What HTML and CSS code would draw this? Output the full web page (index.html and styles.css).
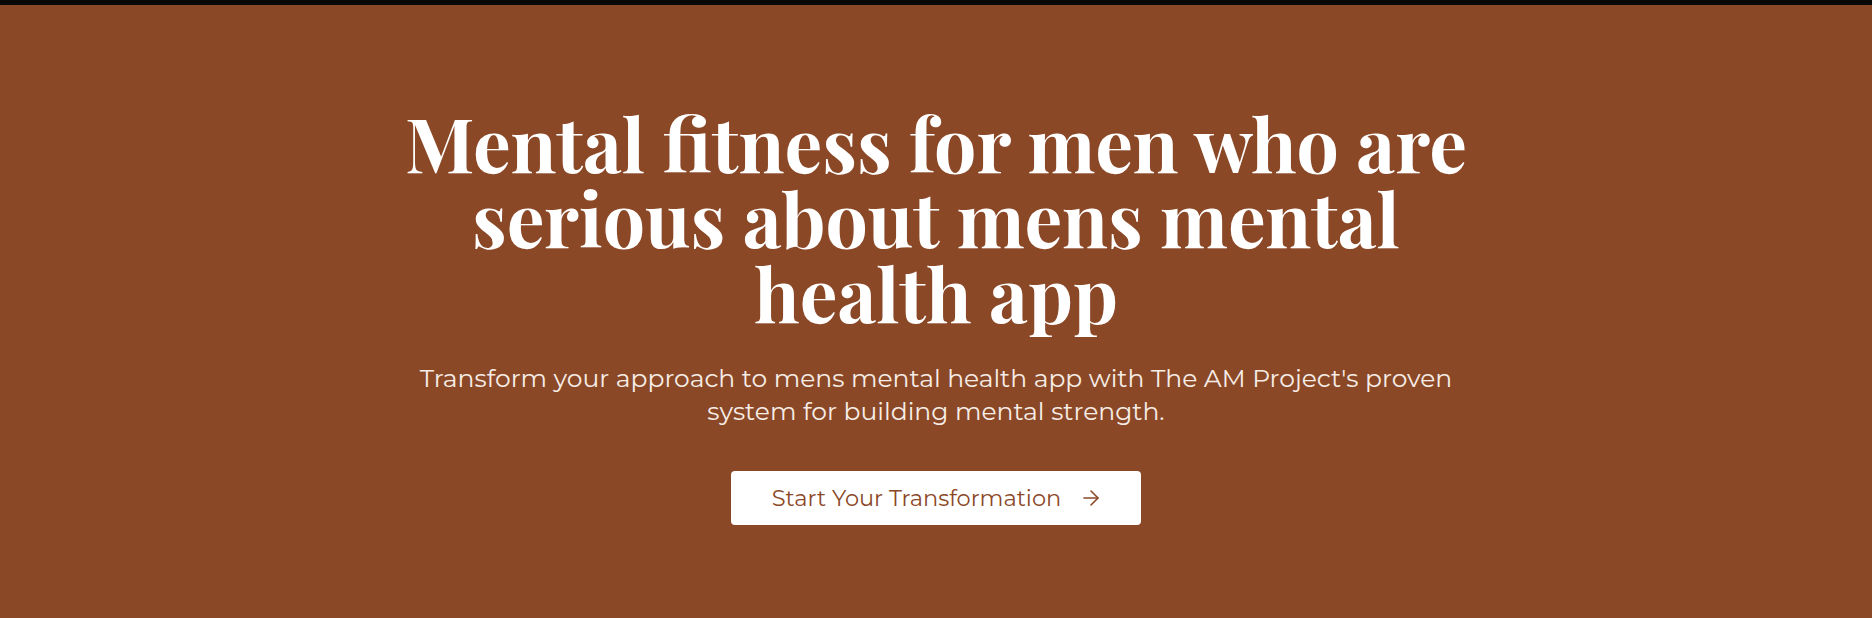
FILE: index.html
```html
<!DOCTYPE html>
<html lang="en">
<head>
<meta charset="utf-8">
<title>The AM Project</title>
<link rel="stylesheet" href="styles.css">
</head>
<body>
<div class="topbar"></div>
<section class="hero">
  <h1 class="hero-title">Mental fitness for men who are serious about mens mental health app</h1>
  <p class="hero-text">Transform your approach to mens mental health app with The AM Project's proven system for building mental strength.</p>
  <a class="hero-btn" href="#">
    <span>Start Your Transformation</span>
    <svg class="hero-btn-icon" viewBox="0 0 24 24" width="24" height="24" fill="none" stroke="currentColor" stroke-width="1.6" stroke-linecap="round" stroke-linejoin="round"><path d="M5 12h14"/><path d="m12 5 7 7-7 7"/></svg>
  </a>
</section>
</body>
</html>
```

FILE: styles.css
```css
html, body {
  margin: 0;
  padding: 0;
}

body {
  background: #8b4827;
  height: 618px;
  overflow: hidden;
}

.topbar {
  height: 5px;
  background: #080808;
}

.hero {
  display: flex;
  flex-direction: column;
  align-items: center;
  text-align: center;
  padding-top: 100px;
}

.hero-title {
  margin: 0;
  max-width: 1120px;
  font-family: "Playfair Display", "Liberation Serif", serif;
  font-weight: 700;
  font-size: 75px;
  line-height: 75px;
  color: #ffffff;
}

.hero-text {
  margin: 32px 0 0;
  max-width: 1080px;
  font-family: "Montserrat", "Inter", sans-serif;
  font-weight: 400;
  font-size: 25px;
  line-height: 33px;
  color: #f6ede6;
}

.hero-btn {
  margin-top: 43px;
  display: flex;
  align-items: center;
  gap: 18px;
  height: 54px;
  box-sizing: border-box;
  padding: 0 38px 0 41px;
  background: #ffffff;
  border-radius: 4px;
  text-decoration: none;
  font-family: "Montserrat", "Inter", sans-serif;
  font-size: 22.5px;
  color: #8b4827;
}

.hero-btn-icon {
  display: block;
}
```
